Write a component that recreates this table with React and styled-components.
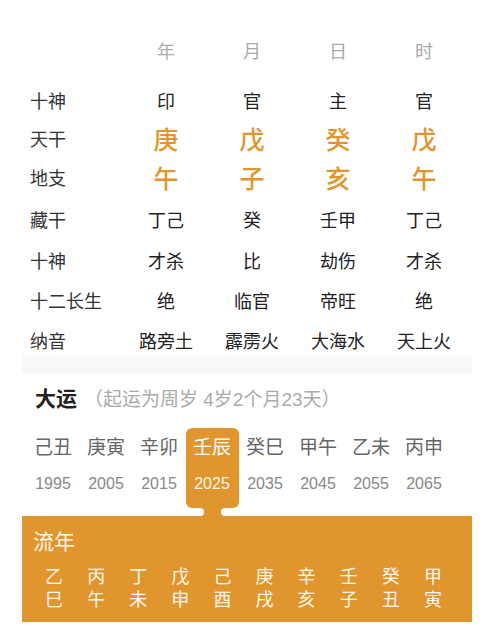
import React from 'react'
import styled, { createGlobalStyle } from 'styled-components'

const ORANGE = '#E1952F'

const pillars = ['年', '月', '日', '时']

const rows = [
    { label: '十神', values: ['印', '官', '主', '官'] },
    { label: '天干', values: ['庚', '戊', '癸', '戊'], big: true, h: 36 },
    { label: '地支', values: ['午', '子', '亥', '午'], big: true, h: 42 },
    { label: '藏干', values: ['丁己', '癸', '壬甲', '丁己'], h: 42 },
    { label: '十神', values: ['才杀', '比', '劫伤', '才杀'] },
    { label: '十二长生', values: ['绝', '临官', '帝旺', '绝'] },
    { label: '纳音', values: ['路旁土', '霹雳火', '大海水', '天上火'] },
]

const dayun = [
    ['己丑', '1995'],
    ['庚寅', '2005'],
    ['辛卯', '2015'],
    ['壬辰', '2025'],
    ['癸巳', '2035'],
    ['甲午', '2045'],
    ['乙未', '2055'],
    ['丙申', '2065'],
]

const liunian = [
    ['乙', '巳'], ['丙', '午'], ['丁', '未'], ['戊', '申'], ['己', '酉'],
    ['庚', '戌'], ['辛', '亥'], ['壬', '子'], ['癸', '丑'], ['甲', '寅'],
]

const GlobalStyle = createGlobalStyle`
    body {
        margin: 0;
        background: #fff;
        font-family: "Liberation Sans", "Noto Sans CJK SC", sans-serif;
    }
`

const Page = styled.div`
    width: 450px;
    margin: 0 22px;
`

const Chart = styled.div`
    padding: 20px 0 13px;
    background: linear-gradient(to bottom, #fff 0, #fff calc(100% - 26px), #f6f6f6 100%);
`

const ChartRow = styled.div`
    display: grid;
    grid-template-columns: 101px repeat(4, 86px);
    align-items: center;
    height: ${p => p.h || 40}px;
`

const RowLabel = styled.div`
    padding-left: 8px;
    font-size: 18px;
    color: #333;
`

const HeaderCell = styled.div`
    text-align: center;
    font-size: 18px;
    color: #aaa;
`

const Cell = styled.div`
    text-align: center;
    font-size: ${p => (p.big ? 25 : 18)}px;
    font-weight: ${p => (p.big ? 500 : 400)};
    color: ${p => (p.big ? ORANGE : '#222')};
`

const SectionHead = styled.div`
    display: flex;
    align-items: center;
    height: 48px;
    padding-left: 13px;
`

const SectionTitle = styled.span`
    font-size: 21px;
    font-weight: 700;
    color: #222;
`

const SectionNote = styled.span`
    margin-left: 7px;
    font-size: 19px;
    color: #aaa;
`

const DayunList = styled.div`
    display: flex;
    align-items: flex-start;
    margin-top: 7px;
    padding-left: 4.5px;
`

const DayunCell = styled.div`
    width: 53px;
    display: flex;
    flex-direction: column;
`

const DayunBody = styled.div`
    display: flex;
    flex-direction: column;
    align-items: center;
    padding: 8px 0 14px;
    border-radius: 6px;
    background: ${p => (p.active ? ORANGE : 'transparent')};
`

const GanZhi = styled.div`
    font-size: 19px;
    line-height: 24px;
    color: ${p => (p.active ? '#fff' : '#666')};
`

const Year = styled.div`
    margin-top: 14px;
    font-size: 16px;
    line-height: 20px;
    color: ${p => (p.active ? '#fff6e8' : '#888')};
`

const Neck = styled.svg`
    display: block;
    width: 53px;
    height: 8px;
`

const Panel = styled.div`
    padding: 13px 0 10px 11px;
    background: ${ORANGE};
`

const PanelTitle = styled.div`
    font-size: 21px;
    line-height: 26px;
    color: #fff8ec;
`

const YearGrid = styled.div`
    display: grid;
    grid-template-columns: repeat(10, 42.1px);
    margin-top: 11px;
`

const YearCell = styled.div`
    display: flex;
    flex-direction: column;
    align-items: center;
    font-size: 18px;
    line-height: 23px;
    color: #fff8ec;
`

export default function App() {
    return (
        <>
            <GlobalStyle />
            <Page>
                <Chart>
                    <ChartRow h={60}>
                        <div />
                        {pillars.map(p => <HeaderCell key={p}>{p}</HeaderCell>)}
                    </ChartRow>
                    {rows.map((r, i) => (
                        <ChartRow key={i} h={r.h}>
                            <RowLabel>{r.label}</RowLabel>
                            {r.values.map((v, j) => <Cell key={j} big={r.big}>{v}</Cell>)}
                        </ChartRow>
                    ))}
                </Chart>

                <SectionHead>
                    <SectionTitle>大运</SectionTitle>
                    <SectionNote>（起运为周岁 4岁2个月23天）</SectionNote>
                </SectionHead>

                <DayunList>
                    {dayun.map(([gz, year], i) => {
                        const active = i === 3
                        return (
                            <DayunCell key={year}>
                                <DayunBody active={active}>
                                    <GanZhi active={active}>{gz}</GanZhi>
                                    <Year active={active}>{year}</Year>
                                </DayunBody>
                                {active && (
                                    <Neck viewBox="0 0 53 8">
                                        <path d="M14 0 A4 4 0 0 1 14 8 L39 8 A4 4 0 0 1 39 0 Z" fill={ORANGE} />
                                    </Neck>
                                )}
                            </DayunCell>
                        )
                    })}
                </DayunList>

                <Panel>
                    <PanelTitle>流年</PanelTitle>
                    <YearGrid>
                        {liunian.map(([a, b], i) => (
                            <YearCell key={i}>
                                <span>{a}</span>
                                <span>{b}</span>
                            </YearCell>
                        ))}
                    </YearGrid>
                </Panel>
            </Page>
        </>
    )
}
